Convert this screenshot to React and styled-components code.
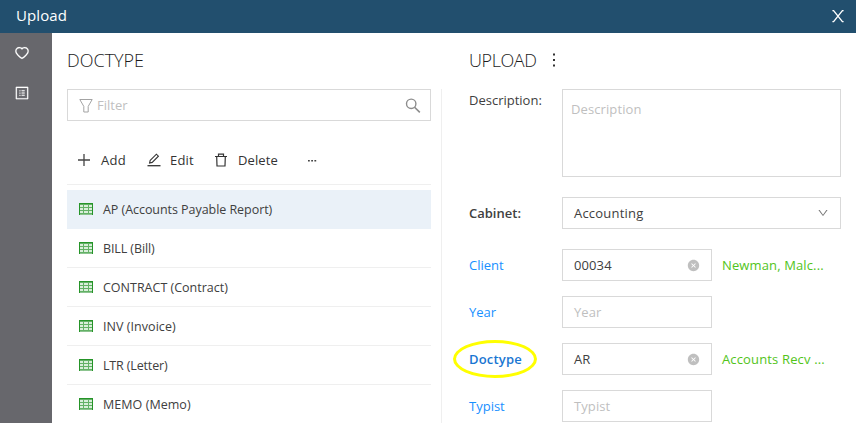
import React from "react";
import styled, { createGlobalStyle } from "styled-components";
import {
  AiOutlineHeart,
  AiOutlineProfile,
  AiOutlineDown,
  AiFillCloseCircle,
} from "react-icons/ai";

const GlobalStyle = createGlobalStyle`
  * { box-sizing: border-box; }
  body {
    margin: 0;
    background: #fff;
    overflow: hidden;
    font-family: "Open Sans", "Noto Sans", sans-serif;
    font-size: 13px;
    color: #404040;
  }
`;

const Window = styled.div`
  height: 423px;
  width: 856px;
  display: flex;
  flex-direction: column;
  overflow: hidden;
`;

const TitleBar = styled.header`
  flex: none;
  height: 33px;
  padding: 0 12px 2px 16px;
  display: flex;
  align-items: center;
  justify-content: space-between;
  background: #224f6e;
  color: #fff;
  font-size: 15px;
`;

const Label = styled.span`
  letter-spacing: ${(p) => p.$track || 0}px;
  white-space: pre;
`;

const TitleText = styled(Label)`
  padding-bottom: 1px;
`;

const Body = styled.div`
  flex: 1;
  min-height: 0;
  display: flex;
`;

const Sidebar = styled.nav`
  flex: none;
  width: 52px;
  padding: 12px 15px;
  display: flex;
  flex-direction: column;
  gap: 24px;
  background: #67676c;
  color: #fff;
  svg {
    display: block;
    flex: none;
    margin-left: -1px;
    stroke: #fff;
    stroke-width: 8px;
  }
`;

const DocPanel = styled.section`
  flex: none;
  width: 389px;
  padding: 0 10px 0 15px;
`;

const Heading = styled.h2`
  margin: 0;
  height: 56px;
  padding-bottom: 2px;
  display: flex;
  align-items: center;
  font-size: 18px;
  font-weight: 300;
  color: #1c1c1c;
`;

const FilterBox = styled.div`
  height: 32px;
  border: 1px solid #d9d9d9;
  padding: 0 9px 0 11px;
  display: flex;
  align-items: center;
  color: #bfbfbf;
  svg { flex: none; }
  span { flex: 1; margin-left: 4px; }
`;

const Toolbar = styled.div`
  height: 64px;
  padding: 14px 0 0 10px;
  display: flex;
  align-items: center;
  border-bottom: 1px solid #efefef;
`;

const Action = styled.div`
  flex: none;
  width: ${(p) => p.$width}px;
  display: flex;
  align-items: center;
  gap: ${(p) => p.$space || 9}px;
  color: #333;
  svg { flex: none; }
`;

const List = styled.ul`
  list-style: none;
  margin: 5px 0 0;
  padding: 0;
`;

const ListRow = styled.li`
  height: 39px;
  padding-left: 12px;
  display: flex;
  align-items: center;
  gap: 10px;
  font-size: 12.5px;
  border-bottom: 1px solid ${(p) => (p.$selected ? "#eaf1f8" : "#efefef")};
  background: ${(p) => (p.$selected ? "#eaf1f8" : "#fff")};
`;

const FormPanel = styled.section`
  flex: 1;
  min-width: 0;
  padding: 0 15px 0 0;
`;

const FormHeading = styled(Heading)`
  padding-left: 28px;
  gap: 15px;
`;

const Form = styled.div`
  height: 340px;
  border-left: 1px solid #efefef;
  padding-left: 27px;
`;

const Field = styled.div`
  display: grid;
  grid-template-columns: 93px ${(p) => (p.$wide ? "279px" : "150px 1fr")};
  align-items: ${(p) => (p.$top ? "start" : "center")};
  margin-bottom: ${(p) => (p.$gap ? 20 : 15)}px;
`;

const FieldLabel = styled.div`
  position: relative;
  line-height: 22px;
  color: ${(p) => p.$color || "#404040"};
  font-weight: ${(p) => (p.$bold ? 600 : 400)};
`;

const Control = styled.div`
  height: 32px;
  padding: 0 11px;
  display: flex;
  align-items: center;
  justify-content: space-between;
  border: 1px solid #d9d9d9;
  color: ${(p) => (p.$empty ? "#bfbfbf" : "#404040")};
  svg { flex: none; display: block; }
`;

const TextArea = styled(Control)`
  height: 88px;
  padding: 10px 8px;
  align-items: flex-start;
`;

const Resolved = styled.div`
  padding-left: 10px;
  color: #52c41a;
`;

const Highlight = styled.div`
  position: absolute;
  left: -16px;
  top: -8px;
  width: 84px;
  height: 38px;
  border: 3px solid #ffff00;
  border-radius: 50%;
`;

const CloseIcon = () => (
  <svg width="12" height="14" viewBox="0 0 12 14" fill="none" stroke="#fff" strokeWidth="1.4">
    <path d="M0.4 1.6h1.2L10.4 12.6h1.2M11.6 1.6h-1.2L1.6 12.6H0.4" />
  </svg>
);

const FilterIcon = () => (
  <svg width="14" height="15" viewBox="0 0 14 15" fill="none" stroke="#a3a3a3" strokeWidth="1">
    <path d="M0.8 1.5h12.4L9.2 8.4v5.6H4.8V8.4z" />
  </svg>
);

const SearchIcon = () => (
  <svg width="16" height="16" viewBox="0 0 16 16" fill="none" stroke="#8c8c8c" strokeWidth="1.4">
    <circle cx="6.2" cy="6.8" r="4.7" />
    <path d="M9.6 10.2L14.8 15.4" strokeWidth="1.6" />
  </svg>
);

const PlusIcon = () => (
  <svg width="14" height="14" viewBox="0 0 14 14" fill="none" stroke="#444" strokeWidth="1.3">
    <path d="M7 1v12M1 7h12" />
  </svg>
);

const EditIcon = () => (
  <svg width="14" height="14" viewBox="0 0 14 14" fill="none" stroke="#333" strokeWidth="1.1">
    <path d="M0.5 12.7h13" strokeWidth="1.3" />
    <path d="M3.2 7.4L9.4 1.2l2 2L5.2 9.4l-2.6 0.6z" />
  </svg>
);

const TrashIcon = () => (
  <svg width="14" height="14" viewBox="0 0 14 14" fill="none" stroke="#333" strokeWidth="1.2">
    <path d="M1 3.5h12M4.5 3.5V1.2h5v2.3M2.7 3.5l0.3 9.5h8l0.3-9.5" />
  </svg>
);

const MoreVertical = () => (
  <svg width="4" height="16" viewBox="0 0 4 16" fill="#333">
    <path d="M1 1.5h2v2H1zM1 7h2v2H1zM1 12.5h2v2H1z" />
  </svg>
);

const MoreHorizontal = () => (
  <svg width="10" height="4" viewBox="0 0 10 4" fill="#444">
    <path d="M1 2h1.8v1.6H1zM4.2 2H6v1.6H4.2zM7.4 2h1.8v1.6H7.4z" />
  </svg>
);

const TableIcon = () => (
  <svg width="14" height="12" viewBox="0 0 14 12" shapeRendering="crispEdges">
    <rect width="14" height="12" fill="#63b166" />
    <path d="M0 0h1v12H0zM13 0h1v12h-1zM0 0h14v1H0z" fill="#259428" />
    <path d="M1 2h3v2H1zM5 2h4v2H5zM10 2h3v2h-3zM1 5h3v2H1zM5 5h4v2H5zM10 5h3v2h-3zM1 8h3v2H1zM5 8h4v2H5zM10 8h3v2h-3z" fill="#d9eeda" />
    <path d="M1 11h12v1H1z" fill="#8cc48f" />
  </svg>
);

const docTypes = [
  ["AP (Accounts Payable Report)", -0.05],
  ["BILL (Bill)", -0.1],
  ["CONTRACT (Contract)", 0],
  ["INV (Invoice)", 0.05],
  ["LTR (Letter)", -0.15],
  ["MEMO (Memo)", 0.05],
];

const fields = [
  { label: "Client", value: "00034", resolved: "Newman, Malc...", track: 0.13 },
  { label: "Year" },
  { label: "Doctype", value: "AR", resolved: "Accounts Recv ...", track: 0.15, marked: true },
  { label: "Typist" },
];

export default function App() {
  return (
    <Window>
      <GlobalStyle />
      <TitleBar>
        <TitleText $track={0.1}>Upload</TitleText>
        <CloseIcon />
      </TitleBar>
      <Body>
        <Sidebar>
          <AiOutlineHeart size={16} />
          <AiOutlineProfile size={16} />
        </Sidebar>
        <DocPanel>
          <Heading><Label>DOCTYPE</Label></Heading>
          <FilterBox>
            <FilterIcon />
            <Label>Filter</Label>
            <SearchIcon />
          </FilterBox>
          <Toolbar>
            <Action $width={70} $space={10}><PlusIcon /><Label $track={0.3}>Add</Label></Action>
            <Action $width={67}><EditIcon /><Label $track={0.2}>Edit</Label></Action>
            <Action $width={93} $space={10}><TrashIcon /><Label $track={0.1}>Delete</Label></Action>
            <MoreHorizontal />
          </Toolbar>
          <List>
            {docTypes.map(([name, track], i) => (
              <ListRow key={name} $selected={i === 0}>
                <TableIcon />
                <Label $track={track}>{name}</Label>
              </ListRow>
            ))}
          </List>
        </DocPanel>
        <FormPanel>
          <FormHeading><Label $track={-0.4}>UPLOAD</Label><MoreVertical /></FormHeading>
          <Form>
            <Field $wide $top $gap>
              <FieldLabel><Label>Description:</Label></FieldLabel>
              <TextArea $empty><Label $track={0.1}>Description</Label></TextArea>
            </Field>
            <Field $wide $gap>
              <FieldLabel $bold><Label>Cabinet:</Label></FieldLabel>
              <Control>
                <Label $track={0.2}>Accounting</Label>
                <AiOutlineDown size={12} color="#777" />
              </Control>
            </Field>
            {fields.map((f) => (
              <Field key={f.label}>
                <FieldLabel $color={f.marked ? "#1976d2" : "#1890ff"} $bold={f.marked}>
                  <Label $track={f.marked ? 0.2 : 0}>{f.label}</Label>
                  {f.marked && <Highlight />}
                </FieldLabel>
                <Control $empty={!f.value}>
                  <Label $track={0.1}>{f.value || f.label}</Label>
                  {f.value && <AiFillCloseCircle size={13} color="#bfbfbf" />}
                </Control>
                {f.resolved && <Resolved><Label $track={f.track}>{f.resolved}</Label></Resolved>}
              </Field>
            ))}
          </Form>
        </FormPanel>
      </Body>
    </Window>
  );
}
